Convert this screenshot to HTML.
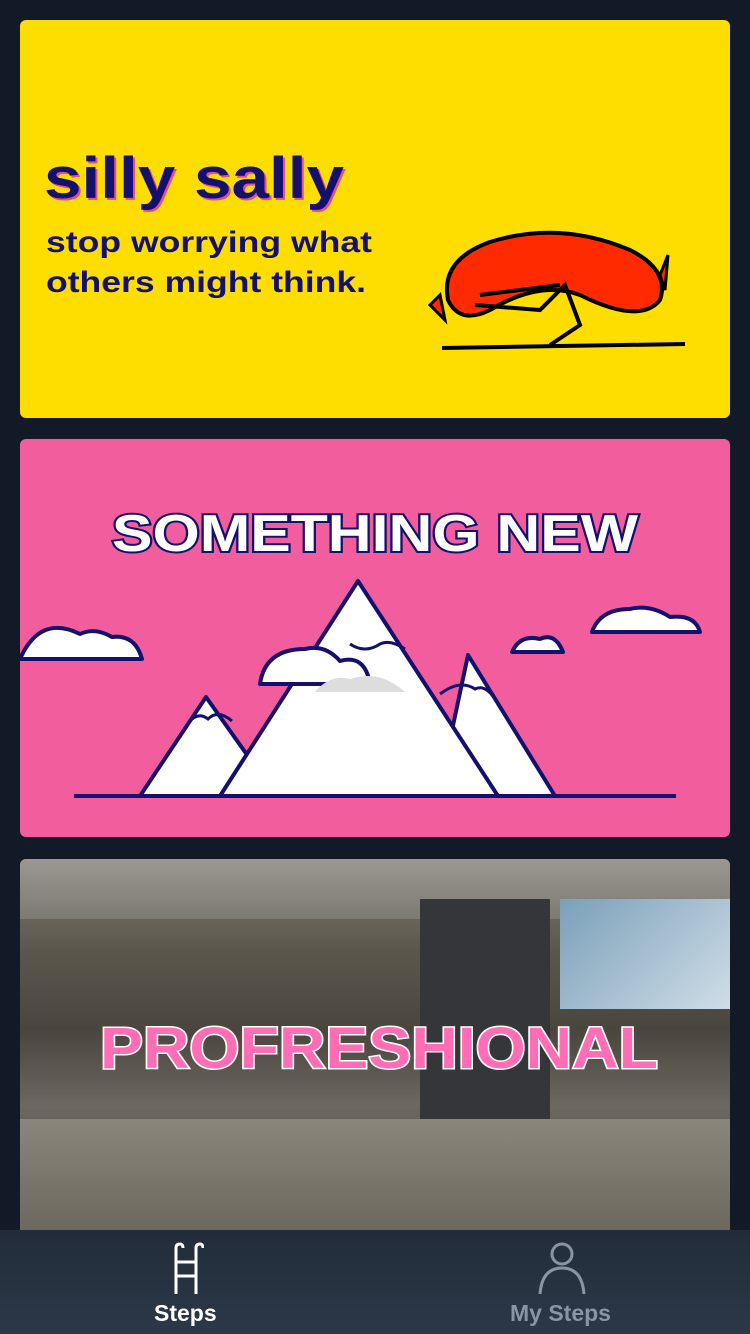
<!DOCTYPE html>
<html><head><meta charset="utf-8"><style>
*{margin:0;padding:0;box-sizing:border-box}
body{width:750px;height:1334px;background:#121a28;position:relative;overflow:hidden;font-family:"Liberation Sans",sans-serif}
.card{position:absolute;left:20px;width:710px;border-radius:6px;overflow:hidden}
.c1{top:20px;height:398px;background:#fedd00}
.c2{top:439px;height:398px;background:#f25e9d}
.c3{top:859px;height:380px;background:linear-gradient(180deg,#8a8a82 0%,#6e6a60 12%,#5a564c 25%,#4a463e 45%,#6c6860 65%,#5a5650 80%,#74706a 100%)}
.nav{position:absolute;left:0;top:1230px;width:750px;height:104px;background:linear-gradient(180deg,#222c3a,#2c3848)}
.lab{position:absolute;top:70px;font-size:23px;font-weight:bold}
</style></head><body>
<div class="card c1">
<svg style="position:absolute;left:0;top:0" width="710" height="398">
<text x="26" y="180" textLength="300" lengthAdjust="spacingAndGlyphs" font-family="Liberation Sans" font-weight="bold" font-size="58" fill="#e64a9a">silly sally</text>
<text x="24" y="178" textLength="300" lengthAdjust="spacingAndGlyphs" font-family="Liberation Sans" font-weight="bold" font-size="58" fill="#14106e">silly sally</text>
<text x="26" y="232" textLength="326" lengthAdjust="spacingAndGlyphs" font-family="Liberation Sans" font-weight="bold" font-size="30" fill="#14106e">stop worrying what</text>
<text x="26" y="272" textLength="320" lengthAdjust="spacingAndGlyphs" font-family="Liberation Sans" font-weight="bold" font-size="30" fill="#14106e">others might think.</text>
<path d="M428 280 Q420 240 470 222 Q540 200 610 230 Q650 250 640 280 Q620 305 560 275 Q520 260 470 290 Q440 305 428 280Z" fill="#ff2a00" stroke="#000" stroke-width="4"/>
<path d="M420 275 L410 285 L425 300Z M640 255 L648 235 L645 270Z" fill="#ff2a00" stroke="#000" stroke-width="3"/>
<path d="M455 285 L520 290 L545 265 L560 305 L530 325 M540 265 L460 275" fill="none" stroke="#000" stroke-width="4"/>
<path d="M422 328 L665 324" stroke="#000" stroke-width="4"/>
</svg>
</div>
<div class="card c2">
<svg width="710" height="398" style="position:absolute;left:0;top:0">
<text x="92" y="112" textLength="526" lengthAdjust="spacingAndGlyphs" font-family="Liberation Sans" font-weight="bold" font-size="52" fill="#fff" stroke="#14106e" stroke-width="4" paint-order="stroke">SOMETHING NEW</text>
<g fill="#fff" stroke="#14106e" stroke-width="4" stroke-linejoin="round">
<path d="M120 357 L186 258 L230 320 L200 357Z"/>
<path d="M418 357 L448 216 L535 357Z"/>
<path d="M200 357 L338 142 L478 357Z"/>
<path d="M0 220 Q20 175 60 195 Q75 188 92 198 Q115 195 122 220Z"/>
<path d="M240 245 Q245 210 285 210 Q305 205 320 222 Q345 215 350 245Z"/>
<path d="M492 213 Q500 195 520 200 Q535 193 543 213Z"/>
<path d="M572 193 Q580 170 610 170 Q630 165 650 178 Q675 175 680 193Z"/>
</g>
<g fill="none" stroke="#14106e" stroke-width="3">
<path d="M168 284 Q178 272 188 280 Q198 270 212 282"/>
<path d="M420 255 Q440 240 455 250 Q465 245 475 260"/>
<path d="M330 205 Q345 215 360 205 Q370 200 385 210"/>
</g>
<path d="M295 253 Q310 235 330 240 Q360 230 385 253Z" fill="#ddd"/>
<path d="M54 357 H656" stroke="#14106e" stroke-width="4"/>
</svg>
</div>
<div class="card c3">
<div style="position:absolute;left:0;top:0;width:710px;height:60px;background:linear-gradient(180deg,#9a9890,#7c7a72)"></div>
<div style="position:absolute;left:540px;top:40px;width:170px;height:110px;background:linear-gradient(135deg,#7aa0b8,#d0dde8)"></div>
<div style="position:absolute;left:400px;top:40px;width:130px;height:320px;background:#34363a"></div>
<div style="position:absolute;left:0;top:260px;width:710px;height:120px;background:linear-gradient(180deg,#8a867c,#6a665c)"></div>
<svg width="710" height="380" style="position:absolute;left:0;top:0"><text x="80" y="209" textLength="558" lengthAdjust="spacingAndGlyphs" font-family="Liberation Sans" font-weight="bold" font-size="58" fill="#ff6eb4" stroke="#fff" stroke-width="3" paint-order="stroke">PROFRESHIONAL</text></svg>
</div>
<div class="nav">
<svg style="position:absolute;left:170px;top:12px" width="34" height="54" fill="none" stroke="#fff" stroke-width="3"><path d="M6 52V6Q6 2 10 2Q13 2 13 6M26 52V6Q26 2 30 2Q33 2 33 6M6 20H26M6 34H26"/></svg>
<svg style="position:absolute;left:536px;top:10px" width="52" height="56" fill="none" stroke="#8a95a3" stroke-width="3"><circle cx="26" cy="14" r="10"/><path d="M4 54Q6 28 26 28Q46 28 48 54"/></svg>
<div class="lab" style="left:154px;color:#fff">Steps</div>
<div class="lab" style="left:510px;color:#8a95a3">My Steps</div>
</div>
</body></html>
